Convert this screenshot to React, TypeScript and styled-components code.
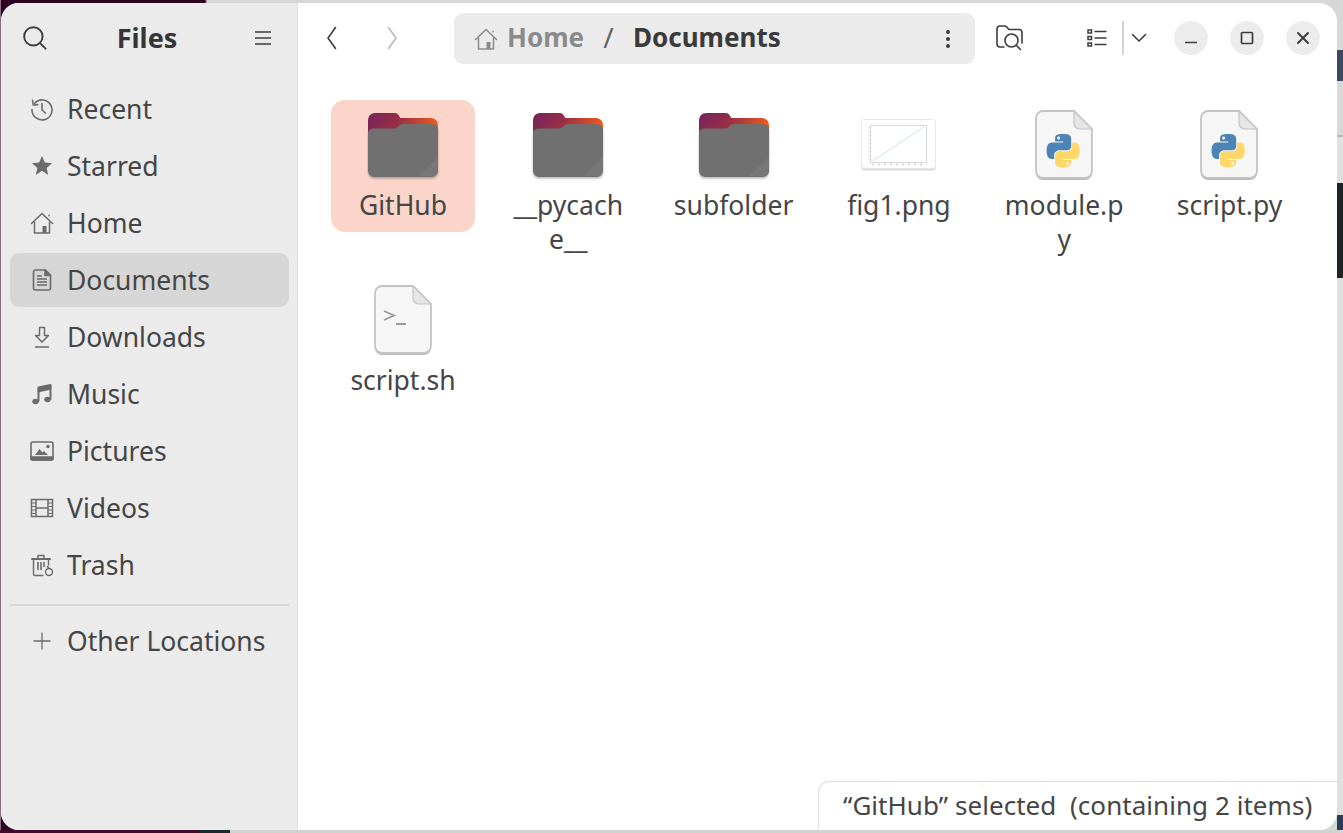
import React from "react";
import styled, { createGlobalStyle } from "styled-components";

const Global = createGlobalStyle`
  html, body { margin: 0; padding: 0; overflow: hidden; }
  * { box-sizing: border-box; }
`;

const Page = styled.div`
  width: 1343px;
  height: 833px;
  padding: 3px 6px 3px 1px;
  font-family: "Noto Sans", "Open Sans", sans-serif;
  color: #3d3d3d;
  background:
    linear-gradient(to bottom, #d8d8d8 0 50px, #3b4a5c 50px 81px, #d9d9d9 81px 135px, #b8b8b8 135px 137px, #e0e0e0 137px 183px, #1e2328 183px 278px, #e0e0e0 278px 815px, #2a3f55 815px 830px, #d4d4d4 830px) right top / 6px 100% no-repeat,
    linear-gradient(to right, #3d0c2f 0 200px, #1b2a2e 200px 230px, #d2d2d2 230px) left bottom / 100% 3px no-repeat,
    linear-gradient(to right, #8b6d84 0 1px, transparent 1px) left top / 100% 100% no-repeat,
    linear-gradient(to right, #2c001e 0 205px, #d6d6d6 207px);
`;

const Window = styled.div`
  position: relative;
  display: flex;
  height: 827px;
  border-radius: 18px;
  overflow: hidden;
  background: #ffffff;
`;

const Sidebar = styled.aside`
  flex: 0 0 297px;
  display: flex;
  flex-direction: column;
  background: #ebebeb;
  border-right: 1px solid #e0e0e0;
`;

const SidebarHeader = styled.header`
  height: 70px;
  display: flex;
  align-items: center;
  justify-content: space-between;
  padding: 0 25px 0 21px;
`;

const AppTitle = styled.h1`
  margin: -2px 0 0 -8px;
  font-size: 27px;
  font-weight: 700;
  line-height: 1;
  color: #363636;
`;

const PlaceList = styled.nav`
  display: flex;
  flex-direction: column;
  gap: 3px;
  padding: 9px 8px 0 9px;
`;

const PlaceRow = styled.div<{ $active?: boolean }>`
  height: 54px;
  display: flex;
  align-items: center;
  gap: 13px;
  padding: 0 0 1px 20px;
  border-radius: 9px;
  background: ${(p) => (p.$active ? "#d6d6d6" : "transparent")};
  font-size: 26.5px;
  color: #454545;
`;

const Separator = styled.hr`
  width: 100%;
  height: 2px;
  margin: 9px 0 5px;
  border: 0;
  background: #d8d8d8;
`;

const Main = styled.main`
  flex: 1;
  display: flex;
  flex-direction: column;
  min-width: 0;
`;

const Toolbar = styled.header`
  height: 70px;
  display: flex;
  align-items: center;
  padding-left: 4px;
  > * { flex-shrink: 0; }
`;

const NavButton = styled.div<{ $dim?: boolean }>`
  width: 60px;
  display: flex;
  justify-content: center;
  opacity: ${(p) => (p.$dim ? 0.35 : 1)};
`;

const PathBar = styled.div`
  width: 521px;
  height: 51px;
  margin: 1px 0 0 32px;
  display: flex;
  align-items: center;
  padding: 0 24px 0 20px;
  border-radius: 9px;
  background: #ebebeb;
`;

const Crumb = styled.span<{ $current?: boolean; $ml?: number }>`
  margin: -3px 0 0 ${(p) => p.$ml ?? 0}px;
  font-size: 26px;
  font-weight: 700;
  color: ${(p) => (p.$current ? "#3a3a3a" : "#8a8a8a")};
`;

const CrumbSlash = styled.span`
  width: 49px;
  margin-top: -3px;
  text-align: center;
  font-size: 28px;
  color: #666;
`;

const Spacer = styled.div`
  flex: 1;
`;

const ToolIcon = styled.div<{ $w: number; $ml?: number }>`
  width: ${(p) => p.$w}px;
  margin-left: ${(p) => p.$ml ?? 0}px;
  display: flex;
  justify-content: center;
`;

const ViewDivider = styled.div`
  width: 2px;
  height: 34px;
  margin-left: 8px;
  background: #d4d4d4;
`;

const WindowControls = styled.div`
  display: flex;
  gap: 22px;
  margin: 0 17px 0 20px;
`;

const WindowButton = styled.div`
  width: 34px;
  height: 34px;
  border-radius: 50%;
  background: #ececec;
  display: flex;
  align-items: center;
  justify-content: center;
`;

const FileGrid = styled.section`
  display: grid;
  grid-template-columns: repeat(6, 144px);
  column-gap: 21.3px;
  row-gap: 9px;
  align-items: start;
  padding: 27px 0 0 33px;
`;

const FileItem = styled.div<{ $selected?: boolean }>`
  width: 144px;
  padding: 5px 0 10px;
  display: flex;
  flex-direction: column;
  align-items: center;
  border-radius: 14px;
  background: ${(p) => (p.$selected ? "#fbd5c9" : "transparent")};
`;

const IconBox = styled.div`
  width: 100%;
  height: 80px;
  margin-bottom: 3px;
  display: flex;
  align-items: center;
  justify-content: center;
  filter: blur(0.4px);
`;

const FileLabel = styled.div`
  width: 122px;
  font-size: 26.5px;
  line-height: 34px;
  text-align: center;
  word-break: break-all;
  color: #454545;
`;

const StatusBar = styled.div`
  position: absolute;
  right: 0;
  bottom: 0;
  width: 519px;
  height: 49px;
  padding: 0 0 2px 24px;
  display: flex;
  align-items: center;
  white-space: pre;
  font-size: 26px;
  letter-spacing: 0.05px;
  color: #454545;
  background: #fff;
  border: 1px solid #dedede;
  border-width: 1px 0 0 1px;
  border-top-left-radius: 11px;
`;

type P = { children: React.ReactNode; s?: number; w?: number };
const Ico = ({ children, s = 24, w = 1.6 }: P) => (
  <svg width={s} height={s} viewBox="0 0 24 24" fill="none" stroke="#6b6b6b" strokeWidth={w} strokeLinecap="round" strokeLinejoin="round">
    {children}
  </svg>
);

const Recent = () => (
  <Ico>
    <path d="M4.6 6.2A10 10 0 1 1 2 12.6" />
    <path d="M2.6 3.4l.6 4.6 4.6-.4" />
    <path d="M12 6.5V13l3.4 3" />
  </Ico>
);
const Star = () => (
  <Ico>
    <path fill="#6b6b6b" stroke="none" d="M12 2l2.9 6.6 7.1.7-5.4 4.7 1.6 7L12 16.8 5.8 20.9l1.6-7L2 9.3l7.1-.7z" />
  </Ico>
);
const HomeIcon = ({ c = "#6b6b6b" }: { c?: string }) => (
  <svg width={24} height={24} viewBox="0 0 24 24" fill="none" stroke={c} strokeWidth={1.5} strokeLinejoin="round" strokeLinecap="round">
    <path d="M1.5 12.5L12 2.5l10.5 10" />
    <path d="M4.5 11v11h15V11" />
    <path d="M19 4.2v.6" />
    <path fill={c} stroke="none" d="M12.5 15h4v7h-4z" />
  </svg>
);
const Doc = () => (
  <Ico>
    <path d="M5.5 2h10l5 5v13a2 2 0 0 1-2 2h-13a2 2 0 0 1-2-2V4a2 2 0 0 1 2-2z" />
    <path d="M15 2v5.5h5.5" fill="#6b6b6b" />
    <path d="M7 11h10M7 14h10M7 17h10M7 8h5" strokeLinecap="butt" />
  </Ico>
);
const Download = () => (
  <Ico w={1.5}>
    <path d="M9.5 2.5h5v8h4L12 17l-6.500-6.500h4z" />
    <path d="M5.500 22h13" />
  </Ico>
);
const Music = () => (
  <Ico>
    <path d="M8.500 19V5.500l12-2.500v14" strokeWidth={2} />
    <path d="M8.500 6l12-2.500V7l-12 2.500z" fill="#6b6b6b" />
    <ellipse cx="5.500" cy="19.500" rx="3.200" ry="2.800" fill="#6b6b6b" stroke="none" />
    <ellipse cx="17.500" cy="17.500" rx="3.200" ry="2.800" fill="#6b6b6b" stroke="none" />
  </Ico>
);
const Pictures = () => (
  <Ico>
    <rect x="1" y="3" width="22" height="18" rx="2" />
    <path d="M1 18h22v1.500a1.500 1.500 0 0 1-1.500 1.500h-19A1.500 1.500 0 0 1 1 19.500z" fill="#6b6b6b" />
    <path fill="#6b6b6b" stroke="none" d="M5 16l4.500-6 3 3.500 1.500-1.500 4 4z" />
    <circle cx="18" cy="7.500" r="1.700" fill="#6b6b6b" stroke="none" />
  </Ico>
);
const Videos = () => (
  <Ico w={1.5}>
    <path d="M1.500 3.500h21v17h-21z" strokeLinejoin="miter" />
    <path d="M6 3.500v17M18 3.500v17M6 12h12" strokeLinecap="butt" />
    <path d="M1.500 7h4.500M1.500 10.500h4.500M1.500 14h4.500M1.500 17.500h4.500M18 7h4.500M18 10.500h4.500M18 14h4.500M18 17.500h4.500" strokeWidth={1} strokeLinecap="butt" />
  </Ico>
);
const Trash = () => (
  <Ico w={1.4}>
    <path d="M2 6h18" strokeWidth={2} />
    <path d="M8 5V2.500h6V5" />
    <path d="M3.500 6.500V21a1.500 1.500 0 0 0 1.500 1.500h8" />
    <path d="M18.500 6.500V12" />
    <path d="M8 9.500v7M11 9.500v7M14 9.500v4" strokeWidth={1.6} />
    <circle cx="19" cy="19" r="3.500" />
    <path d="M19 15.500l-1.500-2" />
  </Ico>
);
const Plus = () => (
  <Ico w={1.3}>
    <path d="M12 4v16M4 12h16" />
  </Ico>
);
const Search = () => (
  <svg width={26} height={26} viewBox="0 0 24 24" fill="none" stroke="#3d3d3d" strokeWidth={1.8} strokeLinecap="round">
    <circle cx="10.500" cy="10.500" r="8.500" />
    <path d="M16.800 17l5 4.800" />
  </svg>
);
const Hamburger = () => (
  <svg width={18} height={18} viewBox="0 0 18 18" stroke="#3d3d3d" strokeWidth={1.5}>
    <path d="M1 3h16M1 9h16M1 15h16" />
  </svg>
);
const ChevronLeft = () => (
  <svg width={14} height={26} viewBox="0 0 14 26" fill="none" stroke="#3d3d3d" strokeWidth={1.6} strokeLinecap="round" strokeLinejoin="round">
    <path d="M10.500 2.500L3 13l7.500 10.500" />
  </svg>
);
const ChevronRight = () => (
  <svg width={14} height={26} viewBox="0 0 14 26" fill="none" stroke="#3d3d3d" strokeWidth={1.6} strokeLinecap="round" strokeLinejoin="round">
    <path d="M3.500 2.500L11 13 3.500 23.500" />
  </svg>
);
const Dots = () => (
  <svg width={6} height={20} viewBox="0 0 6 20" fill="#3d3d3d">
    <circle cx="3" cy="3" r="2" />
    <circle cx="3" cy="10" r="2" />
    <circle cx="3" cy="17" r="2" />
  </svg>
);
const FolderSearch = () => (
  <svg width={28} height={26} viewBox="0 0 28 26" fill="none" stroke="#3d3d3d" strokeWidth={1.6} strokeLinecap="round" strokeLinejoin="round">
    <path d="M8 22H4a3 3 0 0 1-3-3V4a3 3 0 0 1 3-3h4.500a3 3 0 0 1 2.200 1l2.300 2.500h10a3 3 0 0 1 3 3V18" />
    <circle cx="15.500" cy="15.500" r="6.500" />
    <path d="M20.500 20.500l4 4" />
  </svg>
);
const ListView = () => (
  <svg width={20} height={18} viewBox="0 0 20 18" fill="none" stroke="#3d3d3d" strokeWidth={1.500}>
    <rect x="1" y="1" width="3.500" height="3" />
    <rect x="1" y="7.500" width="3.500" height="3" />
    <rect x="1" y="14" width="3.500" height="3" />
    <path d="M7.500 2.500H19.500M7.500 9H19.500M7.500 15.500H19.500" />
  </svg>
);
const ChevronDown = () => (
  <svg width={16} height={10} viewBox="0 0 16 10" fill="none" stroke="#3d3d3d" strokeWidth={1.6} strokeLinecap="round" strokeLinejoin="round">
    <path d="M1.500 1.500L8 8l6.500-6.500" />
  </svg>
);
const Minimize = () => (
  <svg width={12} height={12} viewBox="0 0 12 12" stroke="#3d3d3d" strokeWidth={1.700}>
    <path d="M0 10.500h12" />
  </svg>
);
const Maximize = () => (
  <svg width={14} height={14} viewBox="0 0 14 14" fill="none" stroke="#3d3d3d" strokeWidth={1.700}>
    <rect x="1.500" y="1.500" width="11" height="11" rx="1" />
  </svg>
);
const Close = () => (
  <svg width={14} height={14} viewBox="0 0 14 14" fill="none" stroke="#3d3d3d" strokeWidth={2} strokeLinecap="round">
    <path d="M2 2l10 10M12 2L2 12" />
  </svg>
);

const Folder = ({ id }: { id: string }) => (
  <svg width={70} height={64} viewBox="0 0 70 64" style={{ overflow: "visible" }}>
    <defs>
      <linearGradient id={`fb${id}`} x1="0" y1="0" x2="1" y2="0.25">
        <stop offset="0" stopColor="#74245f" />
        <stop offset="0.5" stopColor="#9a2f45" />
        <stop offset="1" stopColor="#ec5a1e" />
      </linearGradient>
      <filter id={`fs${id}`} x="-10%" y="-10%" width="120%" height="125%">
        <feDropShadow dx="0" dy="1.500" stdDeviation="1.200" floodColor="#000" floodOpacity="0.3" />
      </filter>
    </defs>
    <path fill={`url(#fb${id})`} d="M7 0h20a4 4 0 0 1 3.500 2l1.500 2.500a1 1 0 0 0 1 .5h30a7 7 0 0 1 7 7v12H0V7a7 7 0 0 1 7-7z" />
    <g filter={`url(#fs${id})`}>
      <path fill="#6f6f6f" d="M5 15.500h21q2 0 3.500-1.500l1.500-1.500q1.500-1.500 3.500-1.500h29.500a6 6 0 0 1 6 6v41a6 6 0 0 1-6 6H6a6 6 0 0 1-6-6V20.500a5 5 0 0 1 5-5z" />
    </g>
    <path fill="#777777" d="M70 44v13a6 6 0 0 1-6 6H50z" />
  </svg>
);

const FileShape = ({ children }: { children?: React.ReactNode }) => (
  <svg width={58} height={71} viewBox="0 0 58 71" style={{ overflow: "visible" }}>
    <path fill="#b9b9b9" d="M8 3h32l17 18v42a7 7 0 0 1-7 7H8a7 7 0 0 1-7-7V10a7 7 0 0 1 7-7z" />
    <path fill="#f6f6f6" stroke="#c4c4c4" strokeWidth={1.800} d="M8 1h31l18 18v42a7 7 0 0 1-7 7H8a7 7 0 0 1-7-7V8a7 7 0 0 1 7-7z" />
    <path fill="#e6e6e6" stroke="#c4c4c4" strokeWidth={1.200} d="M39 1v12a6 6 0 0 0 6 6h12z" />
    {children}
  </svg>
);

const PyFile = () => (
  <FileShape>
    <g transform="translate(11.500 24) scale(0.3)">
      <path fill="#4e84b5" d="M54.919 0c-4.584.022-8.961.413-12.813 1.095C30.76 3.099 28.7 7.295 28.7 15.032v10.219h26.813v3.406H18.638c-7.793 0-14.616 4.684-16.75 13.594-2.462 10.213-2.571 16.586 0 27.25 1.906 7.938 6.457 13.594 14.25 13.594h9.219v-12.25c0-8.85 7.657-16.656 16.75-16.656h26.781c7.454 0 13.406-6.138 13.406-13.625v-25.531c0-7.266-6.13-12.725-13.406-13.937C64.282.328 59.502-.02 54.918.001zm-14.5 8.219c2.77 0 5.031 2.299 5.031 5.125 0 2.816-2.262 5.094-5.031 5.094-2.779 0-5.031-2.277-5.031-5.094 0-2.826 2.252-5.125 5.031-5.125z" />
      <path fill="#fdd768" d="M85.638 28.657v11.906c0 9.231-7.826 17-16.75 17H42.106c-7.336 0-13.406 6.278-13.406 13.625v25.531c0 7.266 6.319 11.54 13.406 13.625 8.488 2.496 16.627 2.947 26.781 0 6.75-1.954 13.406-5.888 13.406-13.625V86.5H55.513v-3.406h40.188c7.793 0 10.696-5.436 13.406-13.594 2.799-8.399 2.68-16.476 0-27.25-1.926-7.757-5.604-13.594-13.406-13.594zM70.575 93.313c2.779 0 5.031 2.277 5.031 5.094 0 2.826-2.252 5.125-5.031 5.125-2.77 0-5.031-2.299-5.031-5.125 0-2.816 2.262-5.094 5.031-5.094z" />
    </g>
  </FileShape>
);

const ShFile = () => (
  <FileShape>
    <path fill="none" stroke="#9a9a9a" strokeWidth={1.800} d="M10 26l10 4.500L10 35" />
    <path stroke="#9a9a9a" strokeWidth={2} d="M22 39h10" />
  </FileShape>
);

const Thumbnail = () => (
  <svg width={75} height={52} viewBox="0 0 75 52" style={{ overflow: "visible" }}>
    <rect x="0.500" y="1.500" width="74" height="50" rx="3" fill="#d9d9d9" />
    <rect x="0.500" y="0.500" width="74" height="49" rx="3" fill="#ffffff" stroke="#e6e6e6" />
    <rect x="9.500" y="6.500" width="56" height="37" fill="#fff" stroke="#d8d8d8" />
    <path d="M12 42L63 8" stroke="#cfe1f0" strokeWidth={1} />
    <path d="M8 8v34" stroke="#dcdcdc" strokeWidth={1.500} strokeDasharray="1 3" />
    <path d="M11 45.500h54" stroke="#d0d0d0" strokeWidth={1.500} strokeDasharray="2 4" />
  </svg>
);

const places = [
  { label: "Recent", icon: <Recent /> },
  { label: "Starred", icon: <Star /> },
  { label: "Home", icon: <HomeIcon /> },
  { label: "Documents", icon: <Doc />, active: true },
  { label: "Downloads", icon: <Download /> },
  { label: "Music", icon: <Music /> },
  { label: "Pictures", icon: <Pictures /> },
  { label: "Videos", icon: <Videos /> },
  { label: "Trash", icon: <Trash /> },
];

const files = [
  { label: "GitHub", icon: <Folder id="a" />, selected: true },
  { label: "__pycache__", icon: <Folder id="b" /> },
  { label: "subfolder", icon: <Folder id="c" /> },
  { label: "fig1.png", icon: <Thumbnail /> },
  { label: "module.py", icon: <PyFile /> },
  { label: "script.py", icon: <PyFile /> },
  { label: "script.sh", icon: <ShFile /> },
];

export default function App() {
  return (
    <Page>
      <Global />
      <Window>
        <Sidebar>
          <SidebarHeader>
            <Search />
            <AppTitle>Files</AppTitle>
            <Hamburger />
          </SidebarHeader>
          <PlaceList>
            {places.map((p) => (
              <PlaceRow key={p.label} $active={p.active}>
                {p.icon}
                {p.label}
              </PlaceRow>
            ))}
            <Separator />
            <PlaceRow>
              <Plus />
              Other Locations
            </PlaceRow>
          </PlaceList>
        </Sidebar>
        <Main>
          <Toolbar>
            <NavButton>
              <ChevronLeft />
            </NavButton>
            <NavButton $dim>
              <ChevronRight />
            </NavButton>
            <PathBar>
              <HomeIcon c="#8a8a8a" />
              <Crumb $ml={9}>Home</Crumb>
              <CrumbSlash>/</CrumbSlash>
              <Crumb $current>Documents</Crumb>
              <Spacer />
              <Dots />
            </PathBar>
            <ToolIcon $w={70}>
              <FolderSearch />
            </ToolIcon>
            <ToolIcon $w={34} $ml={35}>
              <ListView />
            </ToolIcon>
            <ViewDivider />
            <ToolIcon $w={30}>
              <ChevronDown />
            </ToolIcon>
            <WindowControls>
              <WindowButton>
                <Minimize />
              </WindowButton>
              <WindowButton>
                <Maximize />
              </WindowButton>
              <WindowButton>
                <Close />
              </WindowButton>
            </WindowControls>
          </Toolbar>
          <FileGrid>
            {files.map((f) => (
              <FileItem key={f.label} $selected={f.selected}>
                <IconBox>{f.icon}</IconBox>
                <FileLabel>{f.label}</FileLabel>
              </FileItem>
            ))}
          </FileGrid>
        </Main>
        <StatusBar>“GitHub” selected  (containing 2 items)</StatusBar>
      </Window>
    </Page>
  );
}
